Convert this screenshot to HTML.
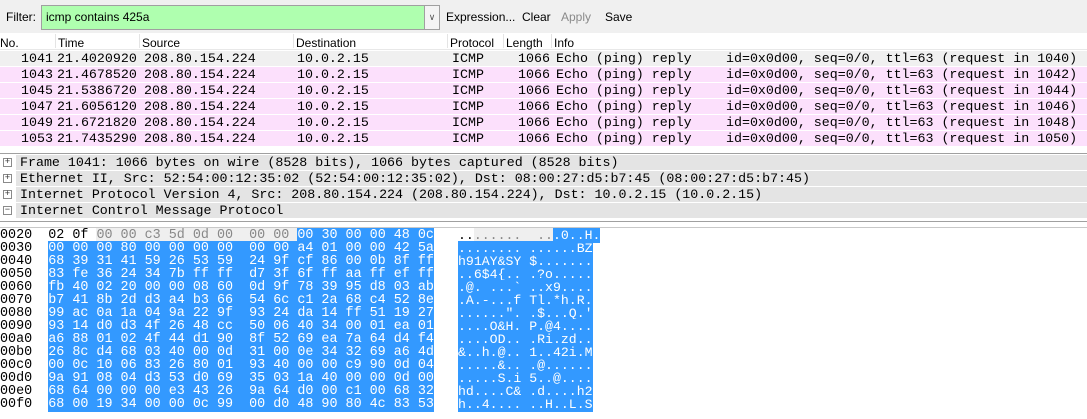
<!DOCTYPE html>
<html><head><meta charset="utf-8"><style>
*{margin:0;padding:0;box-sizing:border-box}
body{width:1087px;height:408px;overflow:hidden;background:#fff;position:relative;font-family:"Liberation Sans",sans-serif}
.a{position:absolute;white-space:pre}
.tb{left:0;top:0;width:1087px;height:33px;background:#f0f0f0}
.ui{font-size:12px;color:#000}
.hdr{left:0;top:33px;width:1087px;height:17px;background:#fff;border-bottom:1px solid #e8e8e8}
.hl{position:absolute;top:1px;width:1px;height:14px;background:#e4e4e4}
.row{left:0;width:1087px;height:15px;font-family:"Liberation Mono",monospace;font-size:13.3px;line-height:15px;color:#000}
.row span{position:absolute;top:0}
.tr{left:16px;width:1071px;height:15px;background:#e4e4e4;font-family:"Liberation Mono",monospace;font-size:13.3px;line-height:15px;padding-left:4px}
.box{left:3px;width:9px;height:9px;border:1px solid #8a8a8a;background:#fff;font-size:9px;line-height:7px;text-align:center;color:#333;font-family:"Liberation Mono",monospace}
.hx{font-family:"Liberation Mono",monospace;font-size:13.4px;line-height:13px;height:13px}
.b{background:#3399ff;color:#fff}
.g{background:#efefef;color:#888}
</style></head><body>
<div class="a tb"></div>
<div class="a ui" style="left:6px;top:10px">Filter:</div>
<div class="a" style="left:41px;top:5px;width:384px;height:25px;background:#afffaf;border:1px solid #a0a0a0"></div>
<div class="a ui" style="left:46px;top:10px">icmp contains 425a</div>
<div class="a" style="left:424px;top:5px;width:16px;height:25px;background:#f4f4f4;border:1px solid #a0a0a0;font-size:9px;text-align:center;line-height:23px;color:#555">&#8744;</div>
<div class="a ui" style="left:446px;top:10px">Expression...</div>
<div class="a ui" style="left:522px;top:10px">Clear</div>
<div class="a ui" style="left:561px;top:10px;color:#8a8a8a">Apply</div>
<div class="a ui" style="left:605px;top:10px">Save</div>
<div class="a hdr"><div class="hl" style="left:55px"></div><div class="hl" style="left:139px"></div><div class="hl" style="left:293px"></div><div class="hl" style="left:447px"></div><div class="hl" style="left:503px"></div><div class="hl" style="left:551px"></div></div>
<div class="a ui" style="left:0;top:36px">No.</div>
<div class="a ui" style="left:58px;top:36px">Time</div>
<div class="a ui" style="left:142px;top:36px">Source</div>
<div class="a ui" style="left:296px;top:36px">Destination</div>
<div class="a ui" style="left:450px;top:36px">Protocol</div>
<div class="a ui" style="left:506px;top:36px">Length</div>
<div class="a ui" style="left:554px;top:36px">Info</div>

<div class="a row" style="top:51px;background:#f0f0f0"><span style="left:21px">1041</span><span style="left:57px">21.4020920</span><span style="left:144px">208.80.154.224</span><span style="left:297px">10.0.2.15</span><span style="left:452px">ICMP</span><span style="left:518px">1066</span><span style="left:556px">Echo (ping) reply</span><span style="left:726px">id=0x0d00, seq=0/0, ttl=63 (request in 1040)</span></div>
<div class="a row" style="top:67px;background:#fce0fc"><span style="left:21px">1043</span><span style="left:57px">21.4678520</span><span style="left:144px">208.80.154.224</span><span style="left:297px">10.0.2.15</span><span style="left:452px">ICMP</span><span style="left:518px">1066</span><span style="left:556px">Echo (ping) reply</span><span style="left:726px">id=0x0d00, seq=0/0, ttl=63 (request in 1042)</span></div>
<div class="a row" style="top:83px;background:#fce0fc"><span style="left:21px">1045</span><span style="left:57px">21.5386720</span><span style="left:144px">208.80.154.224</span><span style="left:297px">10.0.2.15</span><span style="left:452px">ICMP</span><span style="left:518px">1066</span><span style="left:556px">Echo (ping) reply</span><span style="left:726px">id=0x0d00, seq=0/0, ttl=63 (request in 1044)</span></div>
<div class="a row" style="top:99px;background:#fce0fc"><span style="left:21px">1047</span><span style="left:57px">21.6056120</span><span style="left:144px">208.80.154.224</span><span style="left:297px">10.0.2.15</span><span style="left:452px">ICMP</span><span style="left:518px">1066</span><span style="left:556px">Echo (ping) reply</span><span style="left:726px">id=0x0d00, seq=0/0, ttl=63 (request in 1046)</span></div>
<div class="a row" style="top:115px;background:#fce0fc"><span style="left:21px">1049</span><span style="left:57px">21.6721820</span><span style="left:144px">208.80.154.224</span><span style="left:297px">10.0.2.15</span><span style="left:452px">ICMP</span><span style="left:518px">1066</span><span style="left:556px">Echo (ping) reply</span><span style="left:726px">id=0x0d00, seq=0/0, ttl=63 (request in 1048)</span></div>
<div class="a row" style="top:131px;background:#fce0fc"><span style="left:21px">1053</span><span style="left:57px">21.7435290</span><span style="left:144px">208.80.154.224</span><span style="left:297px">10.0.2.15</span><span style="left:452px">ICMP</span><span style="left:518px">1066</span><span style="left:556px">Echo (ping) reply</span><span style="left:726px">id=0x0d00, seq=0/0, ttl=63 (request in 1050)</span></div>
<div class="a" style="left:0;top:153px;width:1087px;height:1px;background:#a0a0a0"></div>

<div class="a tr" style="top:155px">Frame 1041: 1066 bytes on wire (8528 bits), 1066 bytes captured (8528 bits)</div>
<div class="a tr" style="top:171px">Ethernet II, Src: 52:54:00:12:35:02 (52:54:00:12:35:02), Dst: 08:00:27:d5:b7:45 (08:00:27:d5:b7:45)</div>
<div class="a tr" style="top:187px">Internet Protocol Version 4, Src: 208.80.154.224 (208.80.154.224), Dst: 10.0.2.15 (10.0.2.15)</div>
<div class="a tr" style="top:203px">Internet Control Message Protocol</div>
<div class="a box" style="top:158px">+</div>
<div class="a box" style="top:174px">+</div>
<div class="a box" style="top:190px">+</div>
<div class="a box" style="top:206px">&#8722;</div>
<div class="a" style="left:0;top:221px;width:1087px;height:1px;background:#a0a0a0"></div>
<div class="a" style="left:0;top:227px;width:1087px;height:1px;background:#c8c8c8"></div>

<div class="a" style="left:0;top:229px;width:1087px;height:190px">
<div class="hx a" style="left:0;top:0">0020  02 0f <span class="g">00 00 c3 5d 0d 00  00 00 </span><span class="b">00 30 00 00 48 0c</span></div>
<div class="hx a" style="left:0;top:13px">0030  <span class="b">00 00 00 80 00 00 00 00  00 00 a4 01 00 00 42 5a</span></div>
<div class="hx a" style="left:0;top:26px">0040  <span class="b">68 39 31 41 59 26 53 59  24 9f cf 86 00 0b 8f ff</span></div>
<div class="hx a" style="left:0;top:39px">0050  <span class="b">83 fe 36 24 34 7b ff ff  d7 3f 6f ff aa ff ef ff</span></div>
<div class="hx a" style="left:0;top:52px">0060  <span class="b">fb 40 02 20 00 00 08 60  0d 9f 78 39 95 d8 03 ab</span></div>
<div class="hx a" style="left:0;top:65px">0070  <span class="b">b7 41 8b 2d d3 a4 b3 66  54 6c c1 2a 68 c4 52 8e</span></div>
<div class="hx a" style="left:0;top:78px">0080  <span class="b">99 ac 0a 1a 04 9a 22 9f  93 24 da 14 ff 51 19 27</span></div>
<div class="hx a" style="left:0;top:91px">0090  <span class="b">93 14 d0 d3 4f 26 48 cc  50 06 40 34 00 01 ea 01</span></div>
<div class="hx a" style="left:0;top:104px">00a0  <span class="b">a6 88 01 02 4f 44 d1 90  8f 52 69 ea 7a 64 d4 f4</span></div>
<div class="hx a" style="left:0;top:117px">00b0  <span class="b">26 8c d4 68 03 40 00 0d  31 00 0e 34 32 69 a6 4d</span></div>
<div class="hx a" style="left:0;top:130px">00c0  <span class="b">00 0c 10 06 83 26 80 01  93 40 00 00 c9 90 0d 04</span></div>
<div class="hx a" style="left:0;top:143px">00d0  <span class="b">9a 91 08 04 d3 53 d0 69  35 03 1a 40 00 00 0d 00</span></div>
<div class="hx a" style="left:0;top:156px">00e0  <span class="b">68 64 00 00 00 e3 43 26  9a 64 d0 00 c1 00 68 32</span></div>
<div class="hx a" style="left:0;top:169px">00f0  <span class="b">68 00 19 34 00 00 0c 99  00 d0 48 90 80 4c 83 53</span></div>
<div class="hx a" style="left:458px;top:0;font-size:13.2px">..<span class="g">......  ..</span><span class="b">.0..H.</span></div>
<div class="hx a" style="left:458px;top:13px;font-size:13.2px"><span class="b">........ ......BZ</span></div>
<div class="hx a" style="left:458px;top:26px;font-size:13.2px"><span class="b">h91AY&amp;SY $.......</span></div>
<div class="hx a" style="left:458px;top:39px;font-size:13.2px"><span class="b">..6$4{.. .?o.....</span></div>
<div class="hx a" style="left:458px;top:52px;font-size:13.2px"><span class="b">.@. ...` ..x9....</span></div>
<div class="hx a" style="left:458px;top:65px;font-size:13.2px"><span class="b">.A.-...f Tl.*h.R.</span></div>
<div class="hx a" style="left:458px;top:78px;font-size:13.2px"><span class="b">......". .$...Q.'</span></div>
<div class="hx a" style="left:458px;top:91px;font-size:13.2px"><span class="b">....O&amp;H. P.@4....</span></div>
<div class="hx a" style="left:458px;top:104px;font-size:13.2px"><span class="b">....OD.. .Ri.zd..</span></div>
<div class="hx a" style="left:458px;top:117px;font-size:13.2px"><span class="b">&amp;..h.@.. 1..42i.M</span></div>
<div class="hx a" style="left:458px;top:130px;font-size:13.2px"><span class="b">.....&amp;.. .@......</span></div>
<div class="hx a" style="left:458px;top:143px;font-size:13.2px"><span class="b">.....S.i 5..@....</span></div>
<div class="hx a" style="left:458px;top:156px;font-size:13.2px"><span class="b">hd....C&amp; .d....h2</span></div>
<div class="hx a" style="left:458px;top:169px;font-size:13.2px"><span class="b">h..4.... ..H..L.S</span></div>
</div>
</body></html>
